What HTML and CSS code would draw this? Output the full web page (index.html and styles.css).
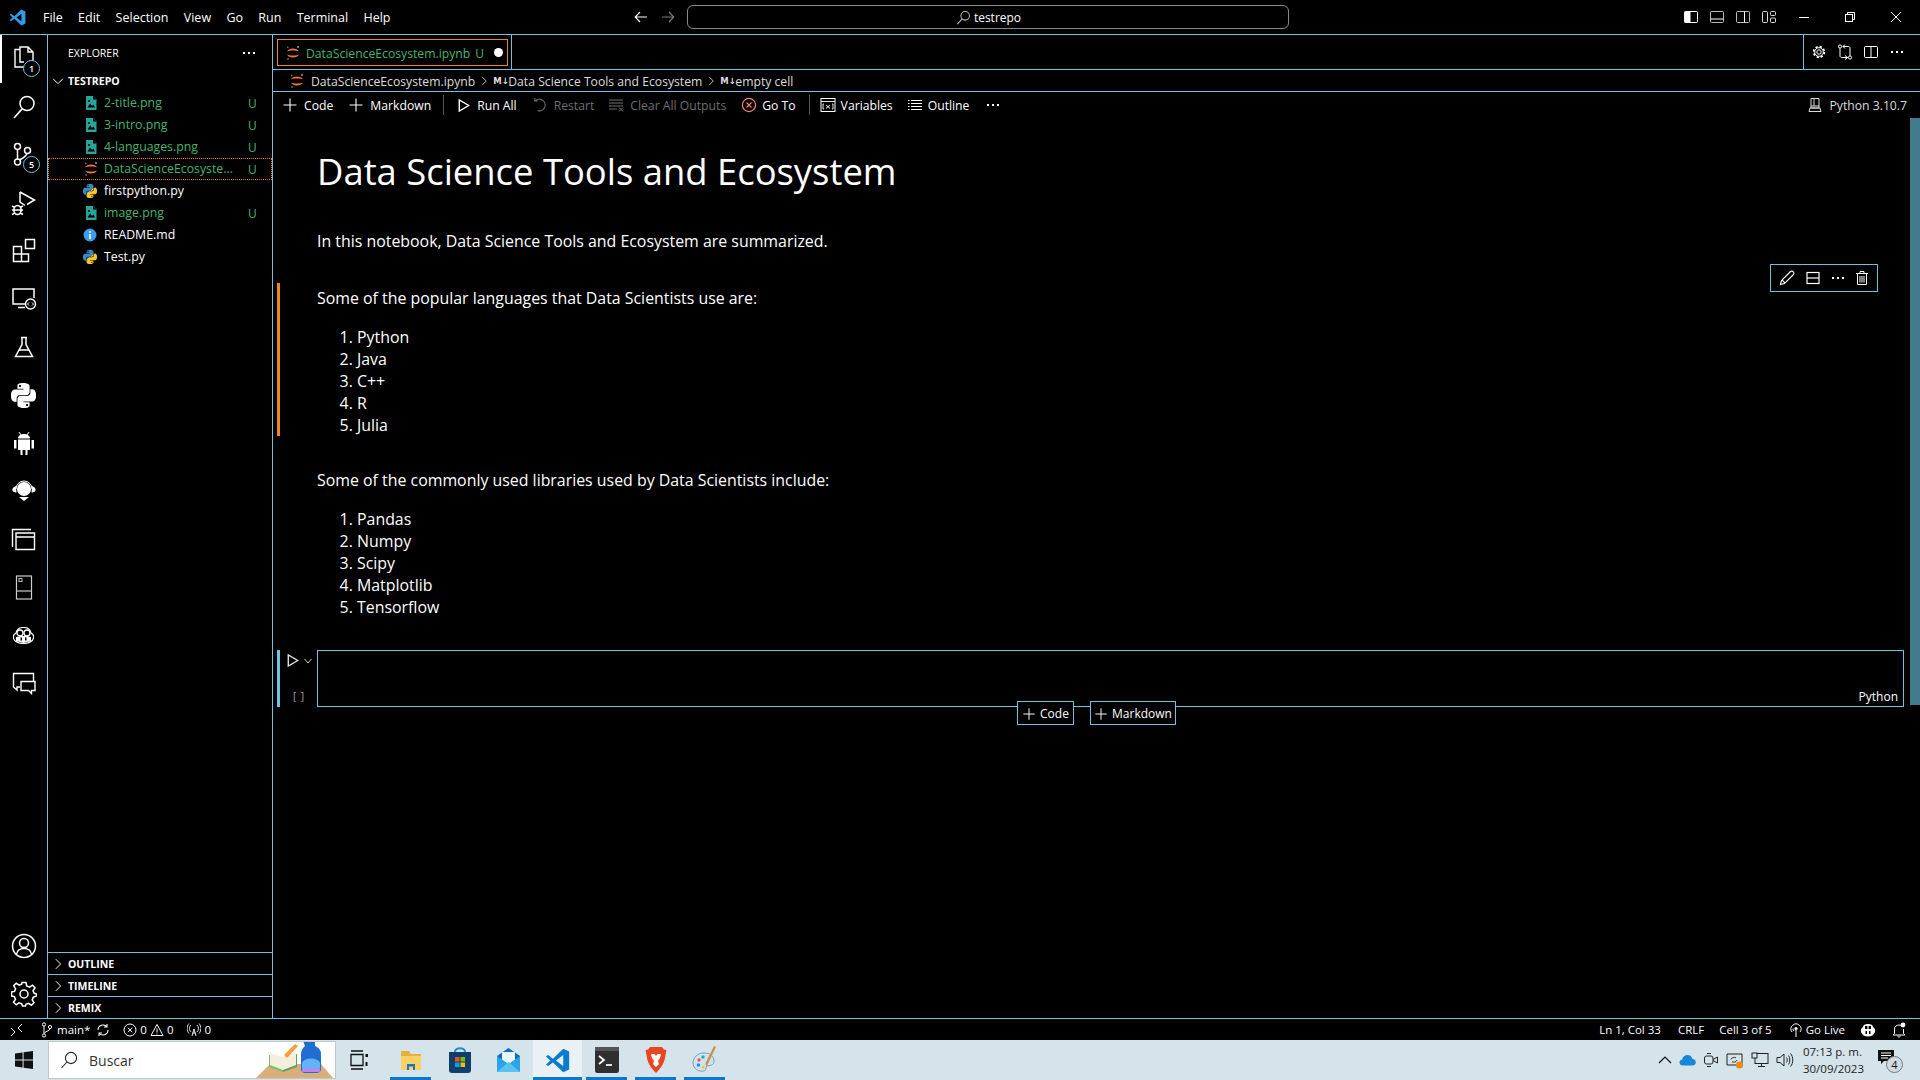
FILE: index.html
```html
<!DOCTYPE html>
<html lang="es">
<head>
    <meta charset="UTF-8" />
    <title>DataScienceEcosystem.ipynb - testrepo</title>
    <link rel="stylesheet" href="styles.css">
</head>
<body>
    <svg class="defs" width="0" height="0">
        <defs>
            <linearGradient id="pygrad" x1="0.2" y1="0.1" x2="0.8" y2="0.9">
                <stop offset="0.5" stop-color="#3d8ac4" />
                <stop offset="0.5" stop-color="#f5c62d" />
            </linearGradient>
            <symbol id="py" viewBox="0 0 24 24">
                <path d="M14.25.18l.9.2.73.26.59.3.45.32.34.34.25.34.16.33.1.3.04.26.02.2-.01.13V8.5l-.05.63-.13.55-.21.46-.26.38-.3.31-.33.25-.35.19-.35.14-.33.1-.3.07-.26.04-.21.02H8.77l-.69.05-.59.14-.5.22-.41.27-.33.32-.27.35-.2.36-.15.37-.1.35-.07.32-.04.27-.02.21v3.06H3.17l-.21-.03-.28-.07-.32-.12-.35-.18-.36-.26-.36-.36-.35-.46-.32-.59-.28-.73-.21-.88-.14-1.05-.05-1.23.06-1.22.16-1.04.24-.87.32-.71.36-.57.4-.44.42-.33.42-.24.4-.16.36-.1.32-.05.24-.01h.16l.06.01h8.16v-.83H6.18l-.01-2.75-.02-.37.05-.34.11-.31.17-.28.25-.26.31-.23.38-.2.44-.18.51-.15.58-.12.64-.1.71-.06.77-.04.84-.02 1.27.05zm-6.3 1.98l-.23.33-.08.41.08.41.23.34.33.22.41.09.41-.09.33-.22.23-.34.08-.41-.08-.41-.23-.33-.33-.22-.41-.09-.41.09zm13.09 3.95l.28.06.32.12.35.18.36.27.36.35.35.47.32.59.28.73.21.88.14 1.04.05 1.23-.06 1.23-.16 1.04-.24.86-.32.71-.36.57-.4.45-.42.33-.42.24-.4.16-.36.09-.32.05-.24.02-.16-.01h-8.22v.82h5.84l.01 2.76.02.36-.05.34-.11.31-.17.29-.25.25-.31.24-.38.2-.44.17-.51.15-.58.13-.64.09-.71.07-.77.04-.84.01-1.27-.04-1.07-.14-.9-.2-.73-.25-.59-.3-.45-.33-.34-.34-.25-.34-.16-.33-.1-.3-.04-.25-.02-.2.01-.13v-5.34l.05-.64.13-.54.21-.46.26-.38.3-.32.33-.24.35-.2.35-.14.33-.1.3-.06.26-.04.21-.02.13-.01h5.84l.69-.05.59-.14.5-.21.41-.28.33-.32.27-.35.2-.36.15-.36.1-.35.07-.32.04-.28.02-.21V6.07h2.09l.14.01zm-6.47 14.25l-.23.33-.08.41.08.41.23.33.33.23.41.08.41-.08.33-.23.23-.33.08-.41-.08-.41-.23-.33-.33-.23-.41-.08-.41.08z" />
            </symbol>
            <symbol id="jupyter" viewBox="0 0 16 16">
                <path d="M2 6.5C3.5 2.6 12.5 2.6 14 6.5C11.5 5.2 4.5 5.2 2 6.5ZM2 9.5C3.5 13.4 12.5 13.4 14 9.5C11.5 10.8 4.5 10.8 2 9.5Z" fill="#f37726" />
                <circle cx="13" cy="2" r="1" fill="#9e9e9e" />
                <circle cx="2.8" cy="2.4" r="0.8" fill="#757575" />
                <circle cx="3" cy="14" r="1" fill="#616161" />
            </symbol>
            <symbol id="image" viewBox="0 0 16 16">
                <path d="M3 1H10L13.5 4.5V15H3Z" fill="#26a69a" />
                <path d="M10 1V4.5H13.5" fill="#000" />
                <path d="M4.5 12.5L7 8.5L9 11L10.5 9.5L12 12.5Z" fill="#000" />
                <circle cx="6" cy="6" r="1.1" fill="#000" />
            </symbol>
            <symbol id="plus" viewBox="0 0 16 16">
                <path d="M8 1.5V14.5M1.5 8H14.5" fill="none" stroke="currentColor" stroke-width="1.1" />
            </symbol>
            <symbol id="chev-r" viewBox="0 0 16 16">
                <path d="M5.5 2.5L11 8L5.5 13.5" fill="none" stroke="currentColor" stroke-width="1.1" />
            </symbol>
            <symbol id="play" viewBox="0 0 16 16">
                <path d="M3.5 2V14L13.5 8Z" fill="none" stroke="currentColor" stroke-width="1.5" />
            </symbol>
        </defs>
    </svg>

    <header class="titlebar">
        <svg class="vs-logo" width="17" height="17" viewBox="0 0 24 24"><path d="M17.5 .8L7.6 10.2L3 6.8L.8 8L5 12L.8 16L3 17.2L7.6 13.8L17.5 23.2L23.2 20.6V3.4ZM17.5 6.8V17.2L10.6 12Z" fill="#2f9ee8" /></svg>
        <nav class="menu">
            <span>File</span><span>Edit</span><span>Selection</span><span>View</span><span>Go</span><span>Run</span><span>Terminal</span><span>Help</span>
        </nav>
        <div class="nav-arrows">
            <svg width="16" height="16" viewBox="0 0 16 16"><path d="M14 8H2.5M7 3L2.2 8L7 13" fill="none" stroke="#fff" stroke-width="1.1" /></svg>
            <svg width="16" height="16" viewBox="0 0 16 16"><path d="M2 8H13.5M9 3L13.8 8L9 13" fill="none" stroke="#7d7d7d" stroke-width="1.1" /></svg>
        </div>
        <div class="command-center">
            <svg width="15" height="15" viewBox="0 0 16 16"><circle cx="9.8" cy="6.2" r="4.6" fill="none" stroke="#bbb" stroke-width="1.1" /><path d="M6.5 9.5L1.5 15" stroke="#bbb" stroke-width="1.1" /></svg>
            <span>testrepo</span>
        </div>
        <div class="layout-icons">
            <svg width="16" height="16" viewBox="0 0 16 16"><rect x="1.5" y="2.5" width="13" height="11" rx="1" fill="none" stroke="#fff" /><rect x="1.5" y="2.5" width="6" height="11" fill="#fff" /></svg>
            <svg width="16" height="16" viewBox="0 0 16 16"><rect x="1.5" y="2.5" width="13" height="11" rx="1" fill="none" stroke="#bbb" /><path d="M1.5 10H14.5" stroke="#fff" /></svg>
            <svg width="16" height="16" viewBox="0 0 16 16"><rect x="1.5" y="2.5" width="13" height="11" rx="1" fill="none" stroke="#bbb" /><path d="M9.5 2.5V13.5" stroke="#fff" /></svg>
            <svg width="16" height="16" viewBox="0 0 16 16"><rect x="1.5" y="2.5" width="5" height="11" rx="1" fill="none" stroke="#ddd" /><rect x="9.5" y="2.5" width="5" height="4" rx="1" fill="none" stroke="#ddd" /><rect x="9.5" y="9" width="5" height="4.5" rx="1" fill="none" stroke="#ddd" /></svg>
        </div>
        <div class="window-btns">
            <svg width="12" height="12" viewBox="0 0 12 12"><path d="M1 6.5H11" stroke="#fff" /></svg>
            <svg width="12" height="12" viewBox="0 0 12 12"><rect x="1.5" y="3.5" width="7" height="7" fill="none" stroke="#fff" /><path d="M3.5 3.5V1.5H10.5V8.5H8.5" fill="none" stroke="#fff" /></svg>
            <svg width="12" height="12" viewBox="0 0 12 12"><path d="M1 1L11 11M11 1L1 11" stroke="#fff" /></svg>
        </div>
    </header>

    <div class="main">
        <aside class="activity">
            <div class="act-item act-active">
                <svg width="26" height="28" viewBox="0 0 26 28"><path d="M8 4.5V2H16L21 7V16H17M8 4.5H3V22H12M8 4.5V17H12M16 2V7H21" fill="none" stroke="#fff" stroke-width="1.4" /></svg>
                <span class="badge">1</span>
            </div>
            <div class="act-item">
                <svg width="26" height="26" viewBox="0 0 26 26"><circle cx="16" cy="9.5" r="7" fill="none" stroke="#fff" stroke-width="1.5" /><path d="M11 15L3 24" stroke="#fff" stroke-width="1.7" /></svg>
            </div>
            <div class="act-item">
                <svg width="26" height="26" viewBox="0 0 26 26"><circle cx="6.5" cy="4.5" r="3" fill="none" stroke="#fff" stroke-width="1.5" /><circle cx="6.5" cy="20" r="3" fill="none" stroke="#fff" stroke-width="1.5" /><circle cx="16.5" cy="8.5" r="3" fill="none" stroke="#fff" stroke-width="1.5" /><path d="M6.5 7.5V17M16 11.5C15 15 10 17 8.5 18" fill="none" stroke="#fff" stroke-width="1.5" /></svg>
                <span class="badge">5</span>
            </div>
            <div class="act-item">
                <svg width="26" height="28" viewBox="0 0 26 28"><path d="M9 3V13L14 16.5M9 3L23.5 11L16 15.5" fill="none" stroke="#fff" stroke-width="1.5" /><ellipse cx="6.5" cy="21" rx="3.6" ry="4.5" fill="none" stroke="#fff" stroke-width="1.6" /><path d="M1 17L4 18.5M12 17L9 18.5M1 21H3M12 21H10M1 25.5L4 24M12 25.5L9 24M3 21H10" stroke="#fff" stroke-width="1.4" /></svg>
            </div>
            <div class="act-item">
                <svg width="26" height="26" viewBox="0 0 26 26"><path d="M2.5 8.5H10.5V23.5H2.5ZM2.5 16H17.5V23.5H10.5" fill="none" stroke="#fff" stroke-width="1.5" /><rect x="14.5" y="1.5" width="9" height="9" fill="none" stroke="#fff" stroke-width="1.5" /></svg>
            </div>
            <div class="act-item">
                <svg width="26" height="24" viewBox="0 0 26 24"><path d="M14 17H2V2H23V11M7 20.5H14" fill="none" stroke="#fff" stroke-width="1.5" /><circle cx="19.5" cy="17" r="5" fill="none" stroke="#fff" stroke-width="1.4" /><path d="M18 15.5L16.5 17L18 18.5M21 15.5L22.5 17L21 18.5" fill="none" stroke="#fff" /></svg>
            </div>
            <div class="act-item">
                <svg width="20" height="24" viewBox="0 0 20 24"><path d="M7 2.5H13M8 2.5V9.5L1.5 21.5H18.5L12 9.5V2.5M5 15H15" fill="none" stroke="#fff" stroke-width="1.5" /></svg>
            </div>
            <div class="act-item">
                <svg width="25" height="25" viewBox="0 0 24 24" fill="#fff"><use href="#py" /></svg>
            </div>
            <div class="act-item">
                <svg width="22" height="25" viewBox="0 0 22 25"><path d="M5 8.5H17V19H14.5V24H12.5V19H9.5V24H7.5V19H5ZM1 9H3.5V17.5H1ZM18.5 9H21V17.5H18.5ZM5 7.5C5 4.5 8 3 11 3C14 3 17 4.5 17 7.5Z" fill="#fff" /><path d="M6 1L8 4M16 1L14 4" stroke="#fff" /></svg>
            </div>
            <div class="act-item">
                <svg width="24" height="22" viewBox="0 0 24 22"><circle cx="12" cy="9" r="7" fill="#fff" /><path d="M4 9A8 8 0 0 1 20 9" fill="none" stroke="#fff" /><path d="M4 6C1 7 0 9 .5 10.5C1 12 3 12.5 4.5 12.5ZM20 6C23 7 24 9 23.5 10.5C23 12 21 12.5 19.5 12.5ZM7 17H17L12 21Z" fill="#fff" /></svg>
            </div>
            <div class="act-item">
                <svg width="25" height="23" viewBox="0 0 25 23"><path d="M1.5 19V1.5H20M5 9H23.5V21.5H5V5H23.5V9" fill="none" stroke="#fff" stroke-width="1.4" /></svg>
            </div>
            <div class="act-item">
                <svg width="18" height="25" viewBox="0 0 18 25"><rect x="1.5" y="1" width="15" height="23" fill="none" stroke="#ccc" stroke-width="1.2" /><path d="M1.5 16H16.5" stroke="#ccc" stroke-width="1.2" /><rect x="4" y="3.5" width="3" height="3" fill="none" stroke="#bbb" /></svg>
            </div>
            <div class="act-item">
                <svg width="21" height="17" viewBox="0 0 21 17"><path d="M3 6C4 2 7 .5 10.5 .5C14 .5 17 2 18 6C20 7 21 9 20.5 11C20 14 16 16.5 10.5 16.5C5 16.5 1 14 .5 11C0 9 1 7 3 6Z" fill="none" stroke="#fff" stroke-width="1.2" /><circle cx="7" cy="6" r="3" fill="none" stroke="#fff" stroke-width="1.3" /><circle cx="14" cy="6" r="3" fill="none" stroke="#fff" stroke-width="1.3" /><path d="M3 10C7 8.5 14 8.5 18 10V14L10.5 16L3 14Z" fill="#fff" /><rect x="7.5" y="10.5" width="1.5" height="3" fill="#000" /><rect x="12" y="10.5" width="1.5" height="3" fill="#000" /></svg>
            </div>
            <div class="act-item">
                <svg width="24" height="23" viewBox="0 0 24 23"><path d="M8 15H5V18L1.5 15V1.5H21.5V9" fill="none" stroke="#fff" stroke-width="1.4" /><path d="M9 9.5H23V18.5H19.5V21.5L16.5 18.5H9Z" fill="none" stroke="#fff" stroke-width="1.4" /></svg>
            </div>
            <div class="act-spacer"></div>
            <div class="act-item">
                <svg width="26" height="26" viewBox="0 0 26 26"><circle cx="13" cy="13" r="11.5" fill="none" stroke="#fff" stroke-width="1.5" /><circle cx="13" cy="10" r="4.5" fill="none" stroke="#fff" stroke-width="1.5" /><path d="M5.5 21.5C6 17.5 9 15.5 13 15.5C17 15.5 20 17.5 20.5 21.5" fill="none" stroke="#fff" stroke-width="1.5" /></svg>
            </div>
            <div class="act-item">
                <svg width="26" height="26" viewBox="0 0 26 26"><path d="M11 1.5H15L15.7 5L18.6 6.2L21.5 4.2L24 6.8L22 9.7L23.2 12.3L25.5 13V15L22.3 16.2L21.2 19L23 21.7L20.4 24.2L17.5 22.3L15 23.3L14.5 25H11.5L10.7 22.9L8 21.8L5.2 23.8L2.5 21.2L4.5 18.3L3.4 15.6L.5 15V11L3.5 10.4L4.6 7.7L2.7 4.7L5.2 2.3L8.2 4.2L10.6 3.2Z" fill="none" stroke="#fff" stroke-width="1.5" /><circle cx="13" cy="13" r="4" fill="none" stroke="#fff" stroke-width="1.5" /></svg>
            </div>
        </aside>

        <section class="sidebar">
            <div class="side-head">
                <span>EXPLORER</span>
                <span class="side-dots"><i></i><i></i><i></i></span>
            </div>
            <div class="tree-root">
                <svg width="14" height="14"><use href="#chev-r" transform="rotate(90 7 7)" /></svg>
                <span>TESTREPO</span>
            </div>
            <ul class="tree">
                <li class="tree-row untracked"><svg class="f-icon" width="16" height="16"><use href="#image" /></svg><span class="f-name">2-title.png</span><span class="f-u">U</span></li>
                <li class="tree-row untracked"><svg class="f-icon" width="16" height="16"><use href="#image" /></svg><span class="f-name">3-intro.png</span><span class="f-u">U</span></li>
                <li class="tree-row untracked"><svg class="f-icon" width="16" height="16"><use href="#image" /></svg><span class="f-name">4-languages.png</span><span class="f-u">U</span></li>
                <li class="tree-row untracked tree-row-active"><svg class="f-icon" width="16" height="16"><use href="#jupyter" /></svg><span class="f-name">DataScienceEcosyste...</span><span class="f-u">U</span></li>
                <li class="tree-row"><svg class="f-icon" width="14" height="14" fill="url(#pygrad)"><use href="#py" /></svg><span class="f-name">firstpython.py</span></li>
                <li class="tree-row untracked"><svg class="f-icon" width="16" height="16"><use href="#image" /></svg><span class="f-name">image.png</span><span class="f-u">U</span></li>
                <li class="tree-row"><svg class="f-icon" width="14" height="14" viewBox="0 0 14 14"><circle cx="7" cy="7" r="6.5" fill="#3d9be9" /><rect x="6.2" y="6" width="1.6" height="5" fill="#fff" /><rect x="6.2" y="3" width="1.6" height="1.8" fill="#fff" /></svg><span class="f-name">README.md</span></li>
                <li class="tree-row"><svg class="f-icon" width="14" height="14" fill="url(#pygrad)"><use href="#py" /></svg><span class="f-name">Test.py</span></li>
            </ul>
            <div class="side-spacer"></div>
            <div class="side-section"><svg width="14" height="14"><use href="#chev-r" /></svg><span>OUTLINE</span></div>
            <div class="side-section"><svg width="14" height="14"><use href="#chev-r" /></svg><span>TIMELINE</span></div>
            <div class="side-section"><svg width="14" height="14"><use href="#chev-r" /></svg><span>REMIX</span></div>
        </section>

        <section class="editor">
            <div class="tabs">
                <div class="tab">
                    <div class="tab-inner">
                        <svg width="16" height="16"><use href="#jupyter" /></svg>
                        <span class="tab-name">DataScienceEcosystem.ipynb</span>
                        <span class="tab-u">U</span>
                        <span class="tab-dot"></span>
                    </div>
                </div>
                <div class="tabs-fill"></div>
                <div class="tab-actions">
                    <svg width="16" height="16" viewBox="0 0 16 16"><circle cx="8" cy="8" r="2.2" fill="none" stroke="#fff" /><circle cx="8" cy="8" r="5.3" fill="none" stroke="#fff" stroke-width="1.8" stroke-dasharray="2.2 1.96" /><circle cx="8" cy="8" r="4.3" fill="none" stroke="#fff" /></svg>
                    <svg width="16" height="16" viewBox="0 0 16 16"><circle cx="3" cy="2.5" r="1.6" fill="none" stroke="#fff" /><circle cx="13" cy="13.5" r="1.6" fill="none" stroke="#fff" /><path d="M3 4.2V12C3 13 4 13.5 5 13.5H11.2M13 11.8V4C13 3 12 2.5 11 2.5H6M8 .5L6 2.5L8 4.5M8 11.5L10.5 13.5L8 15.5" fill="none" stroke="#fff" /></svg>
                    <svg width="16" height="16" viewBox="0 0 16 16"><rect x="1.5" y="2.5" width="13" height="11" rx="1" fill="none" stroke="#fff" /><path d="M8 2.5V13.5" stroke="#fff" /></svg>
                    <span class="tab-dots"><i></i><i></i><i></i></span>
                </div>
            </div>

            <div class="breadcrumb">
                <svg width="16" height="16"><use href="#jupyter" /></svg>
                <span class="crumb-file">DataScienceEcosystem.ipynb</span>
                <svg class="crumb-sep" width="12" height="12"><use href="#chev-r" /></svg>
                <span class="md-mark">M↓</span>
                <span>Data Science Tools and Ecosystem</span>
                <svg class="crumb-sep" width="12" height="12"><use href="#chev-r" /></svg>
                <span class="md-mark">M↓</span>
                <span>empty cell</span>
            </div>

            <div class="nb-toolbar">
                <span class="tool tool-code"><svg width="16" height="16"><use href="#plus" /></svg>Code</span>
                <span class="tool tool-md"><svg width="16" height="16"><use href="#plus" /></svg>Markdown</span>
                <span class="tool-sep"></span>
                <span class="tool tool-run"><svg width="15" height="15"><use href="#play" /></svg>Run All</span>
                <span class="tool tool-off tool-restart"><svg width="15" height="15" viewBox="0 0 16 16"><path d="M5 3H2V0M2.5 3C4 1.5 6 1 8 1.5C11.5 2.3 13.5 5.5 12.8 9C12 12.5 8.5 14.5 5 13.5" fill="none" stroke="currentColor" stroke-width="1.2" /></svg>Restart</span>
                <span class="tool tool-off tool-clear"><svg width="16" height="16" viewBox="0 0 16 16"><path d="M1 3H15M1 6H15M1 9H15M1 12H9M11 10.5L15 14.5M15 10.5L11 14.5" fill="none" stroke="currentColor" /></svg>Clear All Outputs</span>
                <span class="tool tool-goto"><svg width="16" height="16" viewBox="0 0 16 16"><circle cx="8" cy="8" r="6.6" fill="none" stroke="#f48771" stroke-width="1.2" /><path d="M5.5 5.5L10.5 10.5M10.5 5.5L5.5 10.5" stroke="#f48771" stroke-width="1.1" /></svg>Go To</span>
                <span class="tool-sep tool-sep2"></span>
                <span class="tool tool-vars"><svg width="16" height="16" viewBox="0 0 16 16"><rect x="1" y="1.5" width="14" height="13" fill="none" stroke="#fff" /><path d="M1 4.5H15M4 7H3V12H4M12 7H13V12H12M6 8L10 11.5M10 8L6 11.5" fill="none" stroke="#fff" stroke-width=".9" /></svg>Variables</span>
                <span class="tool tool-outline"><svg width="16" height="16" viewBox="0 0 16 16"><path d="M4 3.5H15M4 6.5H15M4 9.5H15M4 12.5H15M1 3.5H2.5M1 6.5H2.5M1 9.5H2.5M1 12.5H2.5" stroke="#fff" /></svg>Outline</span>
                <span class="tool-dots"><i></i><i></i><i></i></span>
                <span class="kernel">
                    <svg width="16" height="16" viewBox="0 0 16 16"><path d="M4 1.5H12V11H4ZM4 9H12M2 14.5L3 11H13L14 14.5ZM7 1.5V9" fill="none" stroke="#ddd" /></svg>
                    Python 3.10.7
                </span>
            </div>

            <div class="notebook">
                <div class="md-cell first-cell">
                    <h1 class="nb-h1">Data Science Tools and Ecosystem</h1>
                    <p class="nb-p intro">In this notebook, Data Science Tools and Ecosystem are summarized.</p>
                </div>
                <div class="md-cell cell-focus">
                    <p class="nb-p">Some of the popular languages that Data Scientists use are:</p>
                    <ol class="nb-list">
                        <li>Python</li>
                        <li>Java</li>
                        <li>C++</li>
                        <li>R</li>
                        <li>Julia</li>
                    </ol>
                </div>
                <div class="md-cell last-md">
                    <p class="nb-p">Some of the commonly used libraries used by Data Scientists include:</p>
                    <ol class="nb-list">
                        <li>Pandas</li>
                        <li>Numpy</li>
                        <li>Scipy</li>
                        <li>Matplotlib</li>
                        <li>Tensorflow</li>
                    </ol>
                </div>
                <div class="code-cell">
                    <div class="code-gutter">
                        <div class="run-line">
                            <svg width="15" height="15"><use href="#play" /></svg>
                            <svg class="run-chev" width="10" height="10" viewBox="0 0 10 10"><path d="M1.5 3L5 7L8.5 3" fill="none" stroke="#ccc" /></svg>
                        </div>
                        <span class="exec-count">[ ]</span>
                    </div>
                    <div class="code-input"><span class="lang">Python</span></div>
                </div>

                <!-- these sit on top of the code cell border -->
                <div class="add-cell">
                    <span class="add-btn add-code"><svg width="14" height="14"><use href="#plus" /></svg>Code</span>
                    <span class="add-btn add-md"><svg width="14" height="14"><use href="#plus" /></svg>Markdown</span>
                </div>
                <div class="cell-toolbar">
                    <svg width="16" height="16" viewBox="0 0 16 16"><path d="M1.5 14.5L2.5 10.5L11 2C12 1 13.5 1 14.3 1.8C15 2.6 15 4 14 5L5.5 13.5ZM3 10L6 13" fill="none" stroke="#fff" stroke-width="1.1" /></svg>
                    <svg width="16" height="16" viewBox="0 0 16 16"><rect x="2" y="2.5" width="12" height="11" fill="none" stroke="#fff" stroke-width="1.2" /><path d="M2 8H14" stroke="#fff" stroke-width="1.2" /></svg>
                    <span class="tab-dots"><i></i><i></i><i></i></span>
                    <svg width="16" height="16" viewBox="0 0 16 16"><path d="M2 3.5H14M6 3.5V1.5H10V3.5M3.5 3.5V14.5H12.5V3.5M6 6V12.5M8 6V12.5M10 6V12.5" fill="none" stroke="#fff" /></svg>
                </div>
                <div class="scroll-thumb"></div>
            </div>
        </section>
    </div>

    <footer class="statusbar">
        <svg class="remote" width="14" height="14" viewBox="0 0 14 14"><path d="M1 13L5 9L1 5M12 1L8 5L12 9" fill="none" stroke="#fff" /></svg>
        <span class="st-branch">
            <svg width="14" height="16" viewBox="0 0 14 16"><circle cx="4" cy="2.5" r="1.6" fill="none" stroke="#fff" /><circle cx="4" cy="13.5" r="1.6" fill="none" stroke="#fff" /><circle cx="10" cy="5" r="1.6" fill="none" stroke="#fff" /><path d="M4 4V12M10 6.5C10 9 6 9 4.5 11" fill="none" stroke="#fff" /></svg>
            main*
            <svg class="st-sync" width="14" height="14" viewBox="0 0 14 14"><path d="M2 7A5 5 0 0 1 11 4M12 7A5 5 0 0 1 3 10M11 1V4H8M3 13V10H6" fill="none" stroke="#fff" stroke-width="1.1" /></svg>
        </span>
        <span class="st-problems">
            <svg width="14" height="14" viewBox="0 0 14 14"><circle cx="7" cy="7" r="6" fill="none" stroke="#fff" /><path d="M4.8 4.8L9.2 9.2M9.2 4.8L4.8 9.2" stroke="#fff" /></svg>
            0
            <svg width="14" height="14" viewBox="0 0 14 14"><path d="M7 1.5L13 12.5H1ZM7 5.5V9.5M7 10.5V11.5" fill="none" stroke="#fff" /></svg>
            0
        </span>
        <span class="st-ports">
            <svg width="14" height="14" viewBox="0 0 14 14"><path d="M5 13L7 6L9 13M5.5 10H8.5M4 2C2 4 2 7 4 9M10 2C12 4 12 7 10 9M2 .5C-.5 3.5 -.5 7.5 2 10.5M12 .5C14.5 3.5 14.5 7.5 12 10.5" fill="none" stroke="#fff" stroke-width=".9" /></svg>
            0
        </span>
        <span class="st-fill"></span>
        <span class="st-item st-ln">Ln 1, Col 33</span>
        <span class="st-item st-crlf">CRLF</span>
        <span class="st-item st-cell">Cell 3 of 5</span>
        <span class="st-item st-live">
            <svg width="14" height="16" viewBox="0 0 14 16"><circle cx="7" cy="6.5" r="1.6" fill="#fff" /><path d="M3 10A5 5 0 1 1 11 10M5 9A2.8 2.8 0 0 1 4 6.5M7 8V15" fill="none" stroke="#fff" /></svg>
            Go Live
        </span>
        <svg class="st-copilot" width="16" height="14" viewBox="0 0 16 14"><path d="M3 4C3 2 5 1 8 1C11 1 13 2 13 4C15 5 15.5 7 15 9C14 12 11 13.5 8 13.5C5 13.5 2 12 1 9C.5 7 1 5 3 4Z" fill="#fff" /><rect x="5" y="3" width="2.4" height="3" fill="#000" /><rect x="8.6" y="3" width="2.4" height="3" fill="#000" /><rect x="5.5" y="8" width="1.5" height="3" fill="#000" /><rect x="9" y="8" width="1.5" height="3" fill="#000" /></svg>
        <svg class="st-bell" width="14" height="16" viewBox="0 0 14 16"><path d="M2.5 11.5V7C2.5 4.5 4.5 3 7 3C8 3 9 3.3 9.5 4M11.5 7V11.5L13 13H1L2.5 11.5M5.5 13.5C5.5 15.5 8.5 15.5 8.5 13.5" fill="none" stroke="#fff" /><circle cx="11" cy="3" r="2.4" fill="#fff" /></svg>
    </footer>

    <footer class="taskbar">
        <div class="tb-start">
            <svg width="18" height="18" viewBox="0 0 18 18"><path d="M0 2.5L7.6 1.4V8.4H0ZM8.6 1.2L18 0V8.4H8.6ZM0 9.5H7.6V16.6L0 15.5ZM8.6 9.5H18V18L8.6 16.8Z" fill="#101010" /></svg>
        </div>
        <div class="tb-search">
            <svg width="18" height="18" viewBox="0 0 18 18"><circle cx="11" cy="7" r="5.6" fill="none" stroke="#222" stroke-width="1.1" /><path d="M7 11L1.5 17" stroke="#222" stroke-width="1.1" /></svg>
            <span>Buscar</span>
            <svg class="tb-art" width="82" height="38" viewBox="0 0 82 38">
                <path d="M17 24H68L80 38H3Z" fill="#d9ae7b" />
                <path d="M16 15L30 19V32L16 27Z" fill="#7cbd6a" /><path d="M30 19L44 14V27L30 32Z" fill="#5fa05a" />
                <path d="M17 13L30 17L43 12V25L30 30L17 25Z" fill="#f3efdc" />
                <path d="M31 15L42 4L45 6L34 18Z" fill="#f2a23a" />
                <path d="M50 1H62V6C66 8 68 10 68 14V29C68 32 65 33 63 33H53C50 33 48 32 48 29V14C48 10 50 8 52 6Z" fill="#1f6fd0" />
                <path d="M49 23C51 17 65 17 67 23V28H49Z" fill="#63b4f5" />
                <rect x="49" y="28" width="18" height="4" rx="1" fill="#b58af0" />
            </svg>
        </div>
        <div class="tb-apps">
            <span class="tb-app tb-taskview">
                <svg width="22" height="22" viewBox="0 0 22 22"><path d="M3 2H15M3 20H15M3 5.5H15V16.5H3Z" fill="none" stroke="#111" stroke-width="1.3" /><rect x="17.5" y="5" width="2.5" height="3" fill="#111" /><rect x="17.5" y="13" width="2" height="4" fill="#111" /></svg>
            </span>
            <span class="tb-app tb-open">
                <svg width="24" height="24" viewBox="0 0 24 24"><path d="M2 3H10L12 6H22V10H2Z" fill="#e8b13c" /><path d="M2 8H22V22H2Z" fill="#fad165" /><path d="M8 16H16V22H8Z" fill="#1a78c2" /><path d="M10 18.5H14V22H10Z" fill="#fad165" /></svg>
            </span>
            <span class="tb-app">
                <svg width="24" height="28" viewBox="0 0 24 28"><path d="M7 6C7 1 17 1 17 6" fill="none" stroke="#1f8fd8" stroke-width="2" /><path d="M1 6H23V24C23 26 22 27 20 27H4C2 27 1 26 1 24Z" fill="#113f6c" /><rect x="7" y="11" width="4.5" height="4.5" fill="#f25022" /><rect x="12.5" y="11" width="4.5" height="4.5" fill="#7fba00" /><rect x="7" y="16.5" width="4.5" height="4.5" fill="#00a4ef" /><rect x="12.5" y="16.5" width="4.5" height="4.5" fill="#ffb900" /></svg>
            </span>
            <span class="tb-app">
                <svg width="25" height="26" viewBox="0 0 25 26"><path d="M12.5 1L24 9V25H1V9Z" fill="#0f6cbd" /><path d="M6 5H19V16H6Z" fill="#eaf6fd" /><path d="M1 9L12.5 17L24 9V25H1Z" fill="#2aa5e6" /><path d="M1 25L12.5 15L24 25Z" fill="#59c3f2" /></svg>
            </span>
            <span class="tb-app tb-open tb-active">
                <svg width="25" height="25" viewBox="0 0 24 24"><path d="M17.5 .8L7.6 10.2L3 6.8L.8 8L5 12L.8 16L3 17.2L7.6 13.8L17.5 23.2L23.2 20.6V3.4ZM17.5 6.8V17.2L10.6 12Z" fill="#0b7bcb" /></svg>
            </span>
            <span class="tb-app tb-open">
                <svg width="24" height="26" viewBox="0 0 24 26"><rect width="24" height="26" rx="2.5" fill="#2f2f2f" /><rect y="0" width="24" height="4" fill="#555" /><path d="M4 9L9 13L4 17" fill="none" stroke="#fff" stroke-width="1.7" /><path d="M11 18H17" stroke="#fff" stroke-width="1.7" /></svg>
            </span>
            <span class="tb-app tb-open">
                <svg width="22" height="28" viewBox="0 0 22 28"><path d="M5 1H17L19 3.5L21.5 4L20 12C19 18 15 23 11 27C7 23 3 18 2 12L.5 4L3 3.5Z" fill="#e9461f" /><path d="M6 8H9.5L11 10L12.5 8H16L15 12L13 15L14 18L11 21L8 18L9 15L7 12Z" fill="#fff" /></svg>
            </span>
            <span class="tb-app tb-open">
                <svg width="26" height="28" viewBox="0 0 26 28"><path d="M12 7C5 7 1 12 1 17C1 23 7 26 12 25C15 24 13 21 15 20C18 19 22 20 22 15C22 10 18 7 12 7Z" fill="#cfe2ee" stroke="#7b9fb5" /><circle cx="7" cy="14" r="1.7" fill="#e55" /><circle cx="11" cy="11" r="1.7" fill="#3a9" /><circle cx="6.5" cy="19" r="1.7" fill="#38d" /><circle cx="11" cy="21" r="1.5" fill="#ec3" /><path d="M24 1L16 18L14 21L13.5 17L22 0Z" fill="#c79354" /></svg>
            </span>
        </div>
        <div class="tb-fill"></div>
        <div class="tray">
            <svg width="14" height="14" viewBox="0 0 14 14"><path d="M1 10L7 4L13 10" fill="none" stroke="#111" stroke-width="1.2" /></svg>
            <svg width="17" height="12" viewBox="0 0 17 12"><path d="M3.5 11.5C1.5 11.5 .5 10 .5 8.5C.5 7 1.5 6 3 5.8C3.5 3 6 1 8.5 1C11 1 12.8 2.5 13.3 4.7C15.5 5 16.8 6.5 16.8 8.2C16.8 10 15.5 11.5 13.5 11.5Z" fill="#1a86d8" /></svg>
            <svg width="16" height="16" viewBox="0 0 16 16"><rect x="1.5" y="4" width="8.5" height="8" rx="2" fill="none" stroke="#222" /><path d="M10 7.5L14.5 5V11L10 8.5" fill="none" stroke="#222" /><path d="M4 1.5H8M4 14.5H8" stroke="#222" /></svg>
            <svg class="tray-net" width="18" height="18" viewBox="0 0 18 18"><path d="M1 3H16V14H1Z" fill="none" stroke="#222" /><path d="M5 8.5C6 6 9 6 10 7M11 9C10 11.5 7 11.5 6 10.5" fill="none" stroke="#222" /><circle cx="13.5" cy="14" r="3.6" fill="#f18a12" /></svg>
            <svg width="18" height="16" viewBox="0 0 18 16"><rect x="4" y="1.5" width="13" height="10" fill="none" stroke="#222" /><rect x="1" y="1" width="5" height="5" fill="#d5e3ea" stroke="#222" /><path d="M10.5 11.5V14.5M7 14.5H14" stroke="#222" /></svg>
            <svg width="18" height="16" viewBox="0 0 18 16"><path d="M1 5.5H4L8 2V14L4 10.5H1ZM10.5 5.5C11.5 7 11.5 9 10.5 10.5M12.5 3.5C14.3 6 14.3 10 12.5 12.5M14.5 1.5C17.5 5 17.5 11 14.5 14.5" fill="none" stroke="#222" /></svg>
        </div>
        <div class="clock">
            <span>07:13 p. m.</span>
            <span>30/09/2023</span>
        </div>
        <div class="tb-notify">
            <svg width="16" height="14" viewBox="0 0 16 14"><path d="M0 0H16V11H6L3 14V11H0Z" fill="#111" /><path d="M3 3H13M3 5.5H13M3 8H10" stroke="#fff" /></svg>
            <span class="notify-count">4</span>
        </div>
    </footer>
</body>
</html>
```

FILE: styles.css
```css
* {
    box-sizing: border-box;
}

html, body {
    margin: 0;
    padding: 0;
}

body {
    width: 1920px;
    height: 1080px;
    overflow: hidden;
    display: flex;
    flex-direction: column;
    background-color: #000;
    color: #fff;
    font-family: "Open Sans", sans-serif;
    font-size: 12.2px;
}

svg {
    flex-shrink: 0;
    display: block;
}

.defs {
    position: absolute;
}

/* title bar */
.titlebar {
    height: 35px;
    border-bottom: 1px solid #6fc3df;
    display: flex;
    align-items: center;
    flex-shrink: 0;
}

.vs-logo {
    margin-left: 9px;
}

.menu {
    display: flex;
    margin-left: 17px;
    gap: 15.3px;
    font-size: 12.5px;
}

.nav-arrows {
    display: flex;
    margin-left: 242.5px;
    gap: 11px;
}

.command-center {
    width: 602px;
    height: 24px;
    margin-left: 11.5px;
    border: 1px solid #8a8a8a;
    border-radius: 6px;
    display: flex;
    align-items: center;
    justify-content: center;
    gap: 3px;
    font-size: 12px;
}

.layout-icons {
    display: flex;
    margin-left: 394px;
    gap: 10px;
}

.window-btns {
    display: flex;
    margin-left: 21px;
    gap: 34px;
}

.main {
    flex: 1;
    display: flex;
    min-height: 0;
}

/* activity bar */
.activity {
    width: 48px;
    border-right: 1px solid #6fc3df;
    display: flex;
    flex-direction: column;
    flex-shrink: 0;
}

.act-item {
    height: 48px;
    position: relative;
    display: flex;
    align-items: center;
    justify-content: center;
    flex-shrink: 0;
}

.act-active {
    border-left: 2px solid #fff;
}

.act-spacer {
    flex: 1;
}

.badge {
    position: absolute;
    left: 23px;
    top: 25px;
    width: 17px;
    height: 17px;
    border: 1px solid #6fc3df;
    border-radius: 50%;
    background-color: #000;
    font-size: 9px;
    font-weight: 600;
    display: flex;
    align-items: center;
    justify-content: center;
}

.act-active .badge {
    left: 21px;
}

/* side bar */
.sidebar {
    width: 225px;
    border-right: 1px solid #6fc3df;
    display: flex;
    flex-direction: column;
    flex-shrink: 0;
}

.side-head {
    height: 35px;
    padding-left: 20px;
    padding-right: 17px;
    display: flex;
    align-items: center;
    justify-content: space-between;
    font-size: 10.5px;
}

.side-dots, .tab-dots, .tool-dots {
    display: flex;
    gap: 3px;
}

.side-dots i, .tab-dots i, .tool-dots i {
    width: 2px;
    height: 2px;
    background-color: #fff;
    display: block;
}

.tree-root {
    height: 22px;
    display: flex;
    align-items: center;
    padding-left: 3px;
    gap: 3px;
    font-size: 10.5px;
    font-weight: 700;
}

.tree {
    list-style: none;
    margin: 0;
    padding: 0;
}

.tree-row {
    height: 22px;
    display: flex;
    align-items: center;
    padding-left: 35px;
    position: relative;
    font-size: 12.3px;
}

.f-name {
    position: absolute;
    left: 56px;
    margin-top: -2px;
}

.f-u {
    position: absolute;
    left: 200px;
    color: #45b56e;
    font-size: 12px;
}

.untracked .f-name {
    color: #45b56e;
}

.tree-row-active {
    outline: 1px dotted #f38518;
    outline-offset: -1px;
}

.side-spacer {
    flex: 1;
}

.side-section {
    height: 22px;
    border-top: 1px solid #6fc3df;
    display: flex;
    align-items: center;
    padding-left: 3px;
    gap: 3px;
    font-size: 10.5px;
    font-weight: 700;
}

/* editor */
.editor {
    flex: 1;
    min-width: 0;
    display: flex;
    flex-direction: column;
}

.tabs {
    height: 35px;
    border-bottom: 1px solid #6fc3df;
    display: flex;
    flex-shrink: 0;
}

.tab {
    width: 239px;
    border-right: 1px solid #6fc3df;
    padding: 4px 3px 3px 4px;
}

.tab-inner {
    height: 27px;
    border: 1px solid #f38518;
    display: flex;
    align-items: center;
    padding-left: 7px;
}

.tab-name {
    margin-left: 5px;
    margin-top: 2px;
    color: #45b56e;
}

.tab-u {
    margin-left: 5px;
    margin-top: 2px;
    color: #45b56e;
    font-size: 12px;
}

.tab-dot {
    width: 9px;
    height: 9px;
    margin-left: 10px;
    border-radius: 50%;
    background-color: #fff;
}

.tabs-fill {
    flex: 1;
}

.tab-actions {
    width: 117px;
    border-left: 1px solid #6fc3df;
    display: flex;
    align-items: center;
    gap: 10px;
    padding-left: 7px;
}

.tab-actions .tab-dots {
    margin-left: 2px;
}

.breadcrumb {
    height: 22px;
    border-bottom: 1px solid #6fc3df;
    display: flex;
    align-items: center;
    padding-left: 16px;
    padding-top: 1px;
    color: #ddd;
    flex-shrink: 0;
}

.crumb-file {
    margin-left: 6px;
}

.crumb-sep {
    margin: 0 3px;
    color: #ddd;
}

.md-mark {
    font-family: "DejaVu Sans", sans-serif;
    font-size: 8.5px;
    font-weight: 700;
    width: 15px;
    white-space: nowrap;
}

.nb-toolbar {
    height: 28px;
    display: flex;
    align-items: center;
    padding-left: 9px;
    padding-bottom: 2px;
    position: relative;
    flex-shrink: 0;
}

.tool {
    display: flex;
    align-items: center;
    gap: 6px;
    white-space: nowrap;
}

.tool-md {
    margin-left: 15px;
}

.tool-sep {
    width: 1px;
    height: 20px;
    background-color: #555;
    margin-left: 12px;
}

.tool-run {
    margin-left: 12px;
}

.tool-off {
    color: #6f6f6f;
}

.tool-restart {
    margin-left: 16px;
}

.tool-clear {
    margin-left: 14px;
}

.tool-goto {
    margin-left: 15px;
}

.tool-goto svg, .tool-vars svg, .tool-outline svg {
    margin-right: -1px;
}

.tool-sep2 {
    margin-left: 13px;
}

.tool-vars {
    margin-left: 10px;
}

.tool-outline {
    margin-left: 14px;
}

.tool-dots {
    margin-left: 18px;
}

.kernel {
    margin-left: auto;
    margin-right: 13px;
    display: flex;
    align-items: center;
    gap: 6px;
    color: #ddd;
}

/* notebook */
.notebook {
    flex: 1;
    position: relative;
    font-size: 15.9px;
    line-height: 22px;
}

.md-cell {
    margin-left: 4px;
    padding-left: 37px;
    border-left: 3px solid transparent;
}

.first-cell {
    padding-top: 26px;
}

.nb-h1 {
    margin: 0;
    font-size: 36.4px;
    font-weight: 400;
    line-height: 50px;
}

.nb-p {
    margin: 0;
}

.intro {
    margin-top: 34px;
}

.cell-focus {
    border-left-color: #f38518;
    margin-top: 31px;
    padding-top: 4px;
}

.last-md {
    margin-top: 33px;
}

.nb-list {
    margin: 17px 0 0;
    padding-left: 40px;
}

.code-cell {
    margin-top: 32px;
    margin-left: 4px;
    height: 57px;
    display: flex;
    border-left: 3px solid #6fc3df;
}

.code-gutter {
    width: 37px;
    position: relative;
}

.run-line {
    display: flex;
    align-items: center;
    padding: 3px 0 0 5px;
    gap: 3px;
    color: #ddd;
}

.exec-count {
    position: absolute;
    left: 13px;
    top: 35px;
    font-size: 10px;
    color: #aaa;
    letter-spacing: 1px;
}

.code-input {
    width: 1587px;
    border: 1px solid #6fc3df;
    position: relative;
}

.lang {
    position: absolute;
    right: 5px;
    bottom: 0;
    font-size: 12px;
    line-height: 18px;
}

.add-cell {
    position: absolute;
    left: 744px;
    top: 581px;
    display: flex;
    gap: 16px;
    font-size: 12px;
    line-height: 22px;
}

.add-btn {
    height: 24px;
    padding-top: 1px;
    border: 1px solid #6fc3df;
    background-color: #000;
    display: flex;
    align-items: center;
    justify-content: center;
    gap: 4px;
}

.add-code {
    width: 57px;
}

.add-md {
    width: 86px;
}

.cell-toolbar {
    position: absolute;
    left: 1497px;
    top: 144px;
    width: 108px;
    height: 28px;
    border: 1px solid #6fc3df;
    display: flex;
    align-items: center;
    justify-content: space-between;
    padding: 0 7px 0 8px;
}

.scroll-thumb {
    position: absolute;
    right: 0;
    top: -2px;
    width: 10px;
    height: 587px;
    background-color: #437b8c;
}

/* status bar */
.statusbar {
    height: 22px;
    border-top: 1px solid #6fc3df;
    display: flex;
    align-items: center;
    font-size: 11.5px;
    flex-shrink: 0;
}

.statusbar span {
    display: flex;
    align-items: center;
    white-space: nowrap;
}

.remote {
    margin-left: 10px;
}

.st-branch {
    margin-left: 16px;
    gap: 3px;
}

.st-sync {
    margin-left: 3px;
}

.st-problems {
    margin-left: 13px;
    gap: 3px;
}

.st-ports {
    margin-left: 14px;
    gap: 3px;
}

.st-fill {
    flex: 1;
}

.st-ln {
    margin-right: 17px;
}

.st-crlf {
    margin-right: 15px;
}

.st-cell {
    margin-right: 17px;
}

.st-live {
    gap: 3px;
    margin-right: 15px;
}

.st-copilot {
    margin-right: 16px;
}

.st-bell {
    margin-right: 14px;
}

/* windows taskbar */
.taskbar {
    height: 40px;
    background-color: #d5e3ea;
    color: #111;
    display: flex;
    align-items: center;
    flex-shrink: 0;
}

.tb-start {
    width: 48px;
    display: flex;
    justify-content: center;
}

.tb-search {
    width: 288px;
    height: 38px;
    background-color: #fff;
    border: 1px solid #c6c6c6;
    display: flex;
    align-items: center;
    padding-left: 11px;
    gap: 11px;
    font-size: 14px;
    color: #333;
    position: relative;
    overflow: hidden;
}

.tb-art {
    position: absolute;
    right: 0;
    bottom: 0;
}

.tb-apps {
    display: flex;
    height: 40px;
    margin-left: 1px;
}

.tb-app {
    width: 49px;
    height: 40px;
    display: flex;
    align-items: center;
    justify-content: center;
    position: relative;
}

.tb-taskview {
    padding-right: 6px;
}

.tb-open::after {
    content: "";
    position: absolute;
    left: 4px;
    right: 4px;
    bottom: 0;
    height: 3px;
    background-color: #0a78d0;
}

.tb-active {
    background-color: #eaf1f5;
}

.tb-active::after {
    left: 0;
    right: 0;
}

.tb-fill {
    flex: 1;
}

.tray {
    display: flex;
    align-items: center;
    gap: 7px;
}

.clock {
    display: flex;
    flex-direction: column;
    align-items: flex-start;
    margin-left: 9px;
    font-size: 11.5px;
    line-height: 17px;
    color: #222;
}

.tb-notify {
    width: 56px;
    height: 40px;
    position: relative;
    padding: 10px 0 0 14px;
}

.notify-count {
    position: absolute;
    left: 22px;
    top: 16px;
    width: 17px;
    height: 17px;
    border: 1px solid #777;
    border-radius: 50%;
    background-color: #cfdbe1;
    font-size: 11px;
    display: flex;
    align-items: center;
    justify-content: center;
}
```
